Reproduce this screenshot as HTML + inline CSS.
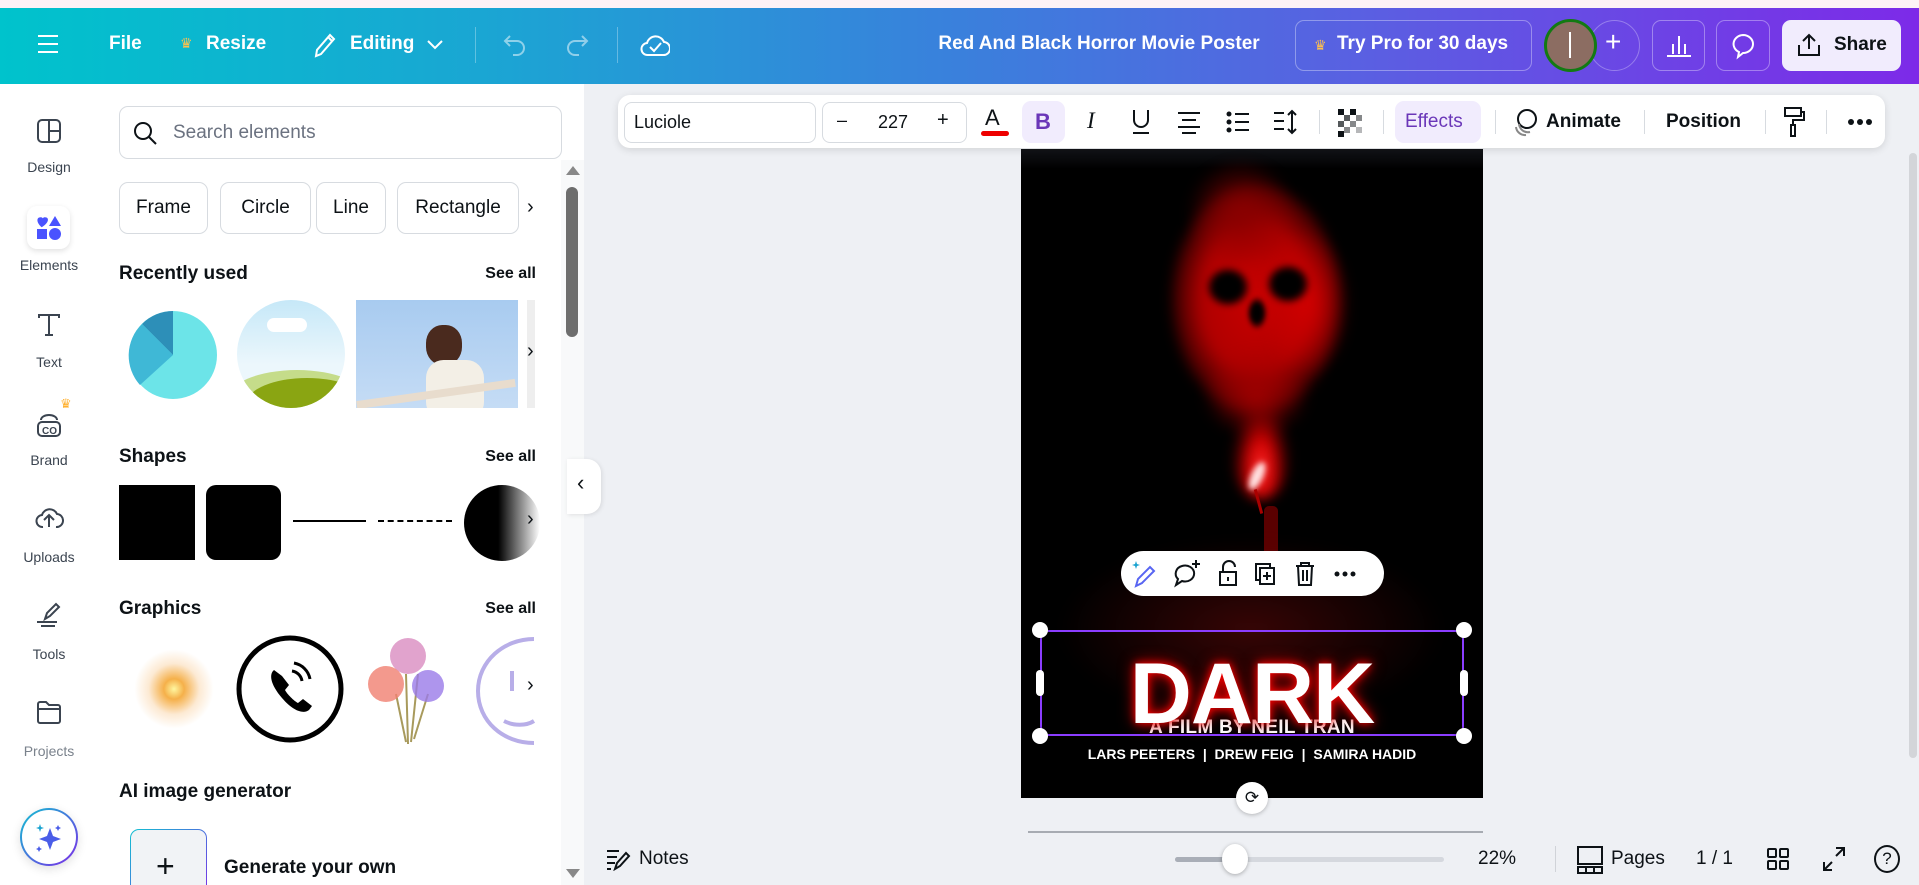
<!DOCTYPE html>
<html><head><meta charset="utf-8"><style>
*{box-sizing:border-box;margin:0;padding:0}
html{width:1919px;height:885px;overflow:hidden}
body{width:1919px;height:885px;overflow:hidden;position:relative;font-family:"Liberation Sans",sans-serif;background:#eef0f4;color:#0d1216}
.a{position:absolute}
.hd{left:0;top:8px;width:1919px;height:76px;background:linear-gradient(90deg,#00c3cc 0%,#1aa6d3 25%,#3a80dc 50%,#5b5ee2 72%,#7d2ae8 100%)}
.ht{color:#fff;font-size:19px;font-weight:bold;top:33px}
.hb{border:1px solid rgba(255,255,255,.35);border-radius:9px}
.rl{width:98px;text-align:center;left:0;font-size:14px;color:#3b4450}
.tb{left:618px;top:95px;width:1267px;height:53px;background:#fff;border-radius:12px;box-shadow:0 2px 8px rgba(0,0,0,.12)}
.bx{border:1px solid #d7dbe0;border-radius:8px}
.chip{top:182px;height:52px;border:1px solid #d7dbe0;border-radius:9px;font-size:19px;line-height:50px;text-align:center;color:#0d1216}
.sec{font-size:19px;font-weight:bold;color:#0d1216}
.see{font-size:16px;left:483px;width:53px;text-align:right;color:#0d1216;font-weight:bold}
.sep{width:1px;height:24px;background:#d7dbe0;top:110px}
.sm{position:absolute;border-radius:50%;filter:blur(6px)}
</style></head><body>
<div class="a" style="left:0;top:0;width:1919px;height:8px;background:#fdf2f6"></div>
<div class="a hd"></div>
<!-- header -->
<svg class="a" style="left:36px;top:33px" width="24" height="22" viewBox="0 0 24 22"><path d="M2 3h20M2 11h20M2 19h20" stroke="#fff" stroke-width="2"/></svg>
<div class="a ht" style="left:109px">File</div>
<div class="a" style="left:180px;top:35px;color:#ffc14d;font-size:14px">♛</div>
<div class="a ht" style="left:206px">Resize</div>
<svg class="a" style="left:311px;top:31px" width="26" height="28" viewBox="0 0 26 28"><path d="M5 25l1-6L19 4l4 4L10 23z M17 6l4 4" stroke="#fff" stroke-width="2" fill="none"/></svg>
<div class="a ht" style="left:350px">Editing</div>
<svg class="a" style="left:426px;top:39px" width="18" height="12"><path d="M2 2l7 7 7-7" stroke="#fff" stroke-width="2" fill="none"/></svg>
<div class="a" style="left:475px;top:27px;width:1px;height:36px;background:rgba(255,255,255,.3)"></div>
<svg class="a" style="left:502px;top:33px" width="26" height="24"><path d="M8 3L3 8l5 5M3 8h12a7 7 0 010 14h-4" stroke="rgba(255,255,255,.5)" stroke-width="2" fill="none"/></svg>
<svg class="a" style="left:564px;top:33px" width="26" height="24"><path d="M18 3l5 5-5 5M23 8H11a7 7 0 000 14h4" stroke="rgba(255,255,255,.5)" stroke-width="2" fill="none"/></svg>
<div class="a" style="left:617px;top:27px;width:1px;height:36px;background:rgba(255,255,255,.3)"></div>
<svg class="a" style="left:640px;top:31px" width="30" height="28"><path d="M8 24a6 6 0 01-1-12 9 9 0 0117-1 6 6 0 01-1 13z" stroke="#fff" stroke-width="2" fill="none"/><path d="M10 16l4 4 7-8" stroke="#fff" stroke-width="2" fill="none"/></svg>
<div class="a ht" style="left:938px;width:322px;text-align:center;font-size:19px">Red And Black Horror Movie Poster</div>
<div class="a hb" style="left:1295px;top:20px;width:237px;height:51px"></div>
<div class="a" style="left:1314px;top:37px;color:#ffc14d;font-size:14px">♛</div>
<div class="a ht" style="left:1337px">Try Pro for 30 days</div>
<div class="a" style="left:1589px;top:20px;width:51px;height:51px;border-radius:50%;border:1px solid rgba(255,255,255,.3)"></div>
<div class="a" style="left:1544px;top:19px;width:53px;height:53px;border-radius:50%;background:#8c6d62;border:3px solid #137a13"></div>
<div class="a" style="left:1569px;top:32px;width:2px;height:26px;background:#fff"></div>
<div class="a" style="left:1605px;top:26px;color:#fff;font-size:28px">+</div>
<div class="a hb" style="left:1652px;top:20px;width:53px;height:51px"></div>
<svg class="a" style="left:1665px;top:32px" width="28" height="26"><path d="M2 24h24M8 22V12M14 22V4M20 22V12" stroke="#fff" stroke-width="2"/></svg>
<div class="a hb" style="left:1716px;top:20px;width:54px;height:51px"></div>
<svg class="a" style="left:1729px;top:32px" width="28" height="28"><path d="M14 3a10 9 0 110 18l-5 4 1-5A10 9 0 0114 3z" stroke="#fff" stroke-width="2" fill="none"/></svg>
<div class="a" style="left:1782px;top:20px;width:119px;height:51px;background:#f1ecfd;border-radius:9px"></div>
<svg class="a" style="left:1796px;top:32px" width="26" height="26"><path d="M13 17V3M7 9l6-6 6 6M3 13v10h20V13" stroke="#0d1216" stroke-width="2" fill="none"/></svg>
<div class="a" style="left:1834px;top:34px;font-size:19px;font-weight:bold">Share</div>

<!-- left rail+panel -->
<div class="a" style="left:0;top:84px;width:584px;height:801px;background:#fff"></div>
<svg class="a" style="left:36px;top:118px" width="26" height="26"><rect x="2" y="2" width="22" height="22" rx="4" stroke="#3b4450" stroke-width="2" fill="none"/><path d="M13 2v22M13 13h11" stroke="#3b4450" stroke-width="2"/></svg>
<div class="a rl" style="top:159px">Design</div>
<div class="a" style="left:27px;top:206px;width:43px;height:43px;background:#fff;border-radius:10px;box-shadow:0 2px 6px rgba(0,0,0,.12)"></div>
<svg class="a" style="left:35px;top:214px" width="28" height="28"><path d="M7 12C2 8 2 3 6 3c1.5 0 2 1 2 1s.5-1 2-1c4 0 4 5-3 9z" fill="#4a53ff" transform="translate(-1,0) scale(1.1)"/><path d="M20 2l6 10H14z" fill="#4a53ff"/><rect x="2" y="15" width="10" height="10" fill="#4a53ff"/><circle cx="20" cy="20" r="6" fill="#4a53ff"/></svg>
<div class="a rl" style="top:257px">Elements</div>
<svg class="a" style="left:36px;top:312px" width="26" height="26"><path d="M3 6V3h20v3M13 3v20M9 23h8" stroke="#3b4450" stroke-width="2" fill="none"/></svg>
<div class="a rl" style="top:354px">Text</div>
<svg class="a" style="left:34px;top:404px" width="30" height="34"><path d="M7 16a8 5 0 0116 0" stroke="#3b4450" stroke-width="2" fill="none"/><rect x="4" y="18" width="22" height="14" rx="4" stroke="#3b4450" stroke-width="2" fill="none"/><text x="8" y="30" font-size="10" font-weight="bold" fill="#3b4450" font-family="Liberation Sans">CO</text></svg>
<div class="a" style="left:60px;top:396px;color:#ffb02e;font-size:13px">♛</div>
<div class="a rl" style="top:452px">Brand</div>
<svg class="a" style="left:34px;top:503px" width="30" height="28"><path d="M9 24a6 6 0 01-1-12 8 8 0 0115-1 6 6 0 01-1 13" stroke="#3b4450" stroke-width="2" fill="none"/><path d="M15 24V13M10 17l5-5 5 5" stroke="#3b4450" stroke-width="2" fill="none"/></svg>
<div class="a rl" style="top:549px">Uploads</div>
<svg class="a" style="left:35px;top:600px" width="28" height="28"><path d="M10 19l2-6 9-9 3 3-9 9z M2 22h20M6 26h14" stroke="#3b4450" stroke-width="2" fill="none"/></svg>
<div class="a rl" style="top:646px">Tools</div>
<svg class="a" style="left:35px;top:698px" width="28" height="28"><path d="M3 6a2 2 0 012-2h6l3 3h9a2 2 0 012 2v14a2 2 0 01-2 2H5a2 2 0 01-2-2z M3 11h22" stroke="#3b4450" stroke-width="2" fill="none"/></svg>
<div class="a rl" style="top:743px;color:#7a828c">Projects</div>
<div class="a" style="left:20px;top:808px;width:58px;height:58px;border-radius:50%;background:linear-gradient(135deg,#11c1d1,#7d2ae8);padding:2px;box-shadow:0 3px 10px rgba(0,0,0,.12)"><div style="width:100%;height:100%;border-radius:50%;background:#fff"></div></div>
<svg class="a" style="left:33px;top:822px" width="32" height="32"><path d="M17 6l3 8 8 3-8 3-3 8-3-8-8-3 8-3z" fill="#4a5de8"/><path d="M7 2l1 3 3 1-3 1-1 3-1-3-3-1 3-1z" fill="#1aa3d0"/><path d="M25 3l1 2 2 1-2 1-1 2-1-2-2-1 2-1z" fill="#4a5de8"/><path d="M6 24l1 2 2 1-2 1-1 2-1-2-2-1 2-1z" fill="#4a5de8"/></svg>

<div class="a bx" style="left:119px;top:106px;width:443px;height:53px;border-radius:9px"></div>
<svg class="a" style="left:132px;top:120px" width="26" height="26"><circle cx="11" cy="11" r="8" stroke="#0d1216" stroke-width="2" fill="none"/><path d="M17 17l7 7" stroke="#0d1216" stroke-width="2"/></svg>
<div class="a" style="left:173px;top:122px;font-size:19px;color:#6b7280">Search elements</div>
<div class="a chip" style="left:119px;width:89px">Frame</div>
<div class="a chip" style="left:220px;width:91px">Circle</div>
<div class="a chip" style="left:316px;width:70px">Line</div>
<div class="a chip" style="left:397px;width:122px">Rectangle</div>
<div class="a" style="left:527px;top:196px;font-size:20px">›</div>
<div class="a sec" style="left:119px;top:263px">Recently used</div><div class="a see" style="top:265px">See all</div>
<svg class="a" style="left:128px;top:310px" width="90" height="90"><circle cx="45" cy="45" r="44" fill="#6ce4e8"/><path d="M45 45L45 1A44 44 0 0 0 14 14z" fill="#2d8fb8"/><path d="M45 45L14 14A44 44 0 0 0 12 75z" fill="#3fb8d6"/></svg>
<div class="a" style="left:237px;top:300px;width:108px;height:108px;border-radius:50%;overflow:hidden;background:linear-gradient(#c6e8f8,#ecf7fc 60%)"><div style="position:absolute;left:-10px;top:70px;width:140px;height:60px;border-radius:50%;background:#c5dc8a"></div><div style="position:absolute;left:10px;top:78px;width:120px;height:50px;border-radius:50%;background:#8aa512"></div><div style="position:absolute;left:30px;top:18px;width:40px;height:14px;border-radius:8px;background:#fff"></div></div>
<div class="a" style="left:356px;top:300px;width:162px;height:108px;background:linear-gradient(#a8cbf0,#c5dcf5);overflow:hidden"><div style="position:absolute;left:70px;top:25px;width:36px;height:40px;border-radius:45%;background:#4a2a1e"></div><div style="position:absolute;left:70px;top:60px;width:58px;height:60px;border-radius:30%;background:#f3efe6"></div><div style="position:absolute;left:0;top:90px;width:160px;height:8px;background:#e8dccd;transform:rotate(-8deg)"></div></div>
<div class="a" style="left:527px;top:300px;width:8px;height:108px;background:#eee"></div>
<div class="a" style="left:527px;top:340px;font-size:20px">›</div>
<div class="a sec" style="left:119px;top:446px">Shapes</div><div class="a see" style="top:448px">See all</div>
<div class="a" style="left:119px;top:485px;width:76px;height:75px;background:#000"></div>
<div class="a" style="left:206px;top:485px;width:75px;height:75px;background:#000;border-radius:10px"></div>
<div class="a" style="left:293px;top:520px;width:73px;height:2px;background:#000"></div>
<div class="a" style="left:378px;top:520px;width:74px;height:0;border-top:2px dashed #000"></div>
<div class="a" style="left:464px;top:485px;width:76px;height:76px;border-radius:50%;background:linear-gradient(90deg,#000 45%,#fff 100%)"></div>
<div class="a" style="left:527px;top:508px;font-size:20px">›</div>
<div class="a sec" style="left:119px;top:598px">Graphics</div><div class="a see" style="top:600px">See all</div>
<div class="a" style="left:134px;top:649px;width:80px;height:80px;border-radius:50%;background:radial-gradient(circle,#fff7a0 0%,#f5b04a 18%,rgba(245,170,80,.25) 45%,rgba(255,255,255,0) 70%)"></div>
<svg class="a" style="left:236px;top:635px" width="110" height="110"><circle cx="54" cy="54" r="51" stroke="#000" stroke-width="5" fill="none"/><path d="M38 35c-5 4-4 14 8 28s22 16 27 12l3-4-9-7-5 4c-4-2-11-9-13-13l4-5-7-9z" fill="#000"/><path d="M56 36a12 12 0 0110 10M58 28a20 20 0 0116 16" stroke="#000" stroke-width="3" fill="none"/></svg>
<svg class="a" style="left:366px;top:634px" width="90" height="112"><path d="M40 40L42 110M52 40L45 108M30 60L40 108M62 60L48 105" stroke="#a89a5c" stroke-width="2" fill="none"/><circle cx="42" cy="22" r="18" fill="#d98cc0" opacity=".8"/><circle cx="20" cy="50" r="18" fill="#f08070" opacity=".8"/><circle cx="62" cy="52" r="16" fill="#9a7ae8" opacity=".8"/></svg>
<svg class="a" style="left:474px;top:636px" width="64" height="110"><path d="M60 3C30 3 4 25 4 55s25 52 56 52" stroke="#b8aee8" stroke-width="4" fill="none"/><path d="M38 35v20M30 85c10 5 22 5 30 0" stroke="#b8aee8" stroke-width="4" fill="none"/></svg>
<div class="a" style="left:527px;top:674px;font-size:20px">›</div>
<div class="a sec" style="left:119px;top:781px">AI image generator</div>
<div class="a" style="left:130px;top:829px;width:77px;height:70px;border-radius:9px;background:linear-gradient(135deg,#11c1d1,#7d2ae8);padding:1px"><div style="width:100%;height:100%;border-radius:8px;background:#f1f3f6"></div></div>
<div class="a" style="left:156px;top:848px;font-size:32px;font-weight:300">+</div>
<div class="a" style="left:224px;top:857px;font-size:19px;font-weight:bold">Generate your own</div>
<div class="a" style="left:561px;top:160px;width:23px;height:725px;background:#f8f9fa"></div>
<div class="a" style="left:566px;top:166px;width:0;height:0;border-left:7px solid transparent;border-right:7px solid transparent;border-bottom:9px solid #888"></div>
<div class="a" style="left:566px;top:187px;width:12px;height:150px;border-radius:6px;background:#6d6d6d"></div>
<div class="a" style="left:566px;top:869px;width:0;height:0;border-left:7px solid transparent;border-right:7px solid transparent;border-top:9px solid #888"></div>
<div class="a" style="left:567px;top:459px;width:34px;height:55px;background:#fff;border-radius:0 14px 14px 0;box-shadow:1px 1px 5px rgba(0,0,0,.1)"></div>
<div class="a" style="left:577px;top:470px;font-size:22px">‹</div>

<!-- poster -->
<div class="a" style="left:1021px;top:149px;width:462px;height:649px;background:#000;overflow:hidden">
 <div class="a" style="left:0;top:0;width:462px;height:20px;background:linear-gradient(#121418,#000)"></div>
 <div class="sm" style="left:150px;top:35px;width:170px;height:230px;background:radial-gradient(ellipse,#c80000 0%,#b00000 45%,rgba(150,0,0,.5) 65%,rgba(0,0,0,0) 75%)"></div>
 <div class="sm" style="left:165px;top:10px;width:110px;height:110px;background:radial-gradient(#8a0000,rgba(0,0,0,0) 70%)"></div>
 <div class="sm" style="left:240px;top:80px;width:90px;height:150px;background:radial-gradient(#d00000,rgba(0,0,0,0) 70%)"></div>
 <div class="sm" style="left:180px;top:200px;width:110px;height:90px;background:radial-gradient(#a00000,rgba(0,0,0,0) 70%)"></div>
 <div class="sm" style="left:185px;top:118px;width:44px;height:40px;background:radial-gradient(#000 45%,rgba(0,0,0,0) 75%);filter:blur(3px)"></div>
 <div class="sm" style="left:245px;top:115px;width:44px;height:40px;background:radial-gradient(#000 45%,rgba(0,0,0,0) 75%);filter:blur(3px)"></div>
 <div class="sm" style="left:226px;top:148px;width:20px;height:32px;background:radial-gradient(#000 40%,rgba(0,0,0,0) 75%);filter:blur(2px)"></div>
 <div class="sm" style="left:210px;top:250px;width:60px;height:100px;background:radial-gradient(ellipse at 50% 70%,#ff3030 0%,#d00000 30%,rgba(160,0,0,.4) 55%,rgba(0,0,0,0) 72%)"></div>
 <div class="sm" style="left:230px;top:312px;width:12px;height:30px;background:#ffe0e0;transform:rotate(25deg);filter:blur(3px)"></div>
 <div class="a" style="left:236px;top:340px;width:3px;height:25px;background:#a00;transform:rotate(-15deg)"></div>
 <div class="a" style="left:243px;top:357px;width:14px;height:45px;background:#5a0000;border-radius:5px 5px 0 0"></div>
 <div class="sm" style="left:20px;top:380px;width:420px;height:200px;background:radial-gradient(ellipse,rgba(110,10,10,.5),rgba(0,0,0,0) 65%)"></div>
 <div class="a" style="left:0;top:568px;width:462px;text-align:center;color:#fff;font-weight:bold;font-size:19px;letter-spacing:.3px">A FILM BY NEIL TRAN</div>
 <div class="a" style="left:0;top:497px;width:462px;text-align:center;color:#fff;font-weight:bold;font-size:86px;line-height:96px;letter-spacing:-1px;text-shadow:0 0 8px #ff0000,0 0 16px #d00000">DARK</div>
 <div class="a" style="left:0;top:597px;width:462px;text-align:center;color:#fff;font-weight:bold;font-size:14px">LARS PEETERS &nbsp;|&nbsp; DREW FEIG &nbsp;|&nbsp; SAMIRA HADID</div>
</div>
<div class="a" style="left:1040px;top:630px;width:424px;height:106px;border:2px solid #8b3dff"></div>
<div class="a" style="left:1032px;top:622px;width:16px;height:16px;border-radius:50%;background:#fff;box-shadow:0 0 3px rgba(0,0,0,.4)"></div>
<div class="a" style="left:1456px;top:622px;width:16px;height:16px;border-radius:50%;background:#fff;box-shadow:0 0 3px rgba(0,0,0,.4)"></div>
<div class="a" style="left:1032px;top:728px;width:16px;height:16px;border-radius:50%;background:#fff;box-shadow:0 0 3px rgba(0,0,0,.4)"></div>
<div class="a" style="left:1456px;top:728px;width:16px;height:16px;border-radius:50%;background:#fff;box-shadow:0 0 3px rgba(0,0,0,.4)"></div>
<div class="a" style="left:1036px;top:670px;width:8px;height:26px;border-radius:4px;background:#fff"></div>
<div class="a" style="left:1460px;top:670px;width:8px;height:26px;border-radius:4px;background:#fff"></div>
<div class="a" style="left:1236px;top:782px;width:32px;height:32px;border-radius:50%;background:#fff;box-shadow:0 1px 4px rgba(0,0,0,.25);text-align:center;line-height:32px;font-size:17px">⟳</div>
<div class="a" style="left:1121px;top:551px;width:263px;height:45px;background:#fff;border-radius:23px"></div>
<svg class="a" style="left:1130px;top:558px" width="240" height="32" fill="none" stroke-width="2">
<path d="M6 28l2-7 12-12 4 4-12 12z" stroke="#5865f2"/><path d="M5 6l1-3 1 3 3 1-3 1-1 3-1-3-3-1z" fill="#1aa3d0"/>
<path d="M52 8a9 8 0 110 15l-6 4 2-6a9 8 0 014-13zM62 6h8M66 2v8" stroke="#0d1216"/>
<path d="M93 14v-5a6 6 0 0112 0M90 14h16v13H90zM98 19v4" stroke="#0d1216"/>
<path d="M126 10V6h14v4M130 10h14v16h-14zM137 14v8M133 18h8M126 10v12h4" stroke="#0d1216"/>
<path d="M166 8h18M171 8V5h8v3M168 8l1 19h12l1-19M173 12v11M177 12v11" stroke="#0d1216"/>
<circle cx="207" cy="16" r="2.5" fill="#0d1216"/><circle cx="215" cy="16" r="2.5" fill="#0d1216"/><circle cx="223" cy="16" r="2.5" fill="#0d1216"/>
</svg>

<!-- format toolbar -->
<div class="a tb"></div>
<div class="a bx" style="left:624px;top:102px;width:192px;height:41px"></div>
<div class="a" style="left:634px;top:112px;font-size:18px">Luciole</div>
<div class="a bx" style="left:822px;top:102px;width:145px;height:41px"></div>
<div class="a" style="left:837px;top:110px;font-size:18px">–</div>
<div class="a" style="left:878px;top:112px;font-size:18px">227</div>
<div class="a" style="left:937px;top:109px;font-size:20px">+</div>
<div class="a" style="left:985px;top:105px;font-size:22px">A</div>
<div class="a" style="left:981px;top:131px;width:28px;height:5px;border-radius:3px;background:#e00"></div>
<div class="a" style="left:1022px;top:101px;width:43px;height:42px;border-radius:9px;background:#f1ecfd"></div>
<div class="a" style="left:1035px;top:109px;font-size:22px;font-weight:bold;color:#6a36b8">B</div>
<div class="a" style="left:1087px;top:108px;font-size:23px;font-style:italic;font-family:'Liberation Serif',serif">I</div>
<svg class="a" style="left:1130px;top:108px" width="22" height="28"><path d="M4 2v10a7 7 0 0014 0V2M3 25h16" stroke="#0d1216" stroke-width="2" fill="none"/></svg>
<svg class="a" style="left:1176px;top:110px" width="26" height="24"><path d="M2 3h22M6 10h14M2 17h22M6 23h14" stroke="#0d1216" stroke-width="2"/></svg>
<svg class="a" style="left:1225px;top:110px" width="26" height="24"><circle cx="4" cy="4" r="2.5" fill="#0d1216"/><circle cx="4" cy="12" r="2.5" fill="#0d1216"/><circle cx="4" cy="20" r="2.5" fill="#0d1216"/><path d="M10 4h14M10 12h14M10 20h14" stroke="#0d1216" stroke-width="2"/></svg>
<svg class="a" style="left:1272px;top:108px" width="28" height="28"><path d="M2 5h10M2 13h10M2 21h10M20 3v22M16 7l4-4 4 4M16 21l4 4 4-4" stroke="#0d1216" stroke-width="2" fill="none"/></svg>
<div class="a sep" style="left:1319px"></div>
<svg class="a" style="left:1338px;top:109px" width="26" height="28"><g fill="#0d1216"><rect x="0" y="0" width="6" height="6"/><rect x="12" y="0" width="6" height="6"/><rect x="6" y="6" width="6" height="6" opacity=".7"/><rect x="18" y="6" width="6" height="6" opacity=".5"/><rect x="0" y="12" width="6" height="6" opacity=".7"/><rect x="12" y="12" width="6" height="6" opacity=".5"/><rect x="6" y="18" width="6" height="6" opacity=".5"/><rect x="18" y="18" width="6" height="6" opacity=".3"/><rect x="0" y="22" width="6" height="6"/></g></svg>
<div class="a sep" style="left:1383px"></div>
<div class="a" style="left:1395px;top:101px;width:86px;height:42px;border-radius:9px;background:#f1ecfd"></div>
<div class="a" style="left:1405px;top:111px;font-size:19px;color:#6a36b8">Effects</div>
<div class="a sep" style="left:1495px"></div>
<svg class="a" style="left:1510px;top:107px" width="32" height="30"><circle cx="17" cy="12" r="9" stroke="#0d1216" stroke-width="2" fill="none"/><path d="M9 17a9 9 0 0011 8M6 20a9 9 0 0010 8" stroke="#888" stroke-width="2" fill="none"/></svg>
<div class="a" style="left:1546px;top:111px;font-size:19px;font-weight:bold">Animate</div>
<div class="a sep" style="left:1644px"></div>
<div class="a" style="left:1666px;top:111px;font-size:19px;font-weight:bold">Position</div>
<div class="a sep" style="left:1765px"></div>
<svg class="a" style="left:1782px;top:106px" width="24" height="32"><path d="M3 2h16v8H3zM19 6h3v8H11v5M9 19h4v11H9z" stroke="#0d1216" stroke-width="2" fill="none"/></svg>
<div class="a sep" style="left:1826px"></div>
<svg class="a" style="left:1847px;top:118px" width="26" height="8"><circle cx="4" cy="4" r="3" fill="#0d1216"/><circle cx="13" cy="4" r="3" fill="#0d1216"/><circle cx="22" cy="4" r="3" fill="#0d1216"/></svg>
<div class="a" style="left:1909px;top:153px;width:8px;height:605px;border-radius:4px;background:#d3d5d9"></div>

<!-- bottom -->
<div class="a" style="left:1028px;top:831px;width:455px;height:2px;background:#a7abb2"></div>
<svg class="a" style="left:605px;top:847px" width="26" height="24"><path d="M2 4h12M2 10h10M2 16h8M2 22h4M10 22l2-6 9-10 3 3-9 10z" stroke="#0d1216" stroke-width="2" fill="none"/></svg>
<div class="a" style="left:639px;top:848px;font-size:19px">Notes</div>
<div class="a" style="left:1175px;top:857px;width:269px;height:5px;border-radius:3px;background:#d5d8de"></div>
<div class="a" style="left:1175px;top:857px;width:60px;height:5px;border-radius:3px;background:#a9aeb7"></div>
<div class="a" style="left:1222px;top:844px;width:26px;height:30px;border-radius:50%;background:#fff;box-shadow:0 1px 4px rgba(0,0,0,.3)"></div>
<div class="a" style="left:1478px;top:848px;font-size:19px">22%</div>
<div class="a" style="left:1555px;top:846px;width:1px;height:26px;background:#d0d3d8"></div>
<svg class="a" style="left:1576px;top:845px" width="28" height="30"><rect x="2" y="2" width="24" height="17" stroke="#0d1216" stroke-width="2" fill="none"/><path d="M2 22h24v6H2zM10 22v6M18 22v6" stroke="#0d1216" stroke-width="2" fill="none"/></svg>
<div class="a" style="left:1611px;top:848px;font-size:19px">Pages</div>
<div class="a" style="left:1696px;top:848px;font-size:19px">1 / 1</div>
<svg class="a" style="left:1766px;top:847px" width="24" height="24"><g stroke="#0d1216" stroke-width="2" fill="none"><rect x="2" y="2" width="8" height="8" rx="1"/><rect x="14" y="2" width="8" height="8" rx="1"/><rect x="2" y="14" width="8" height="8" rx="1"/><rect x="14" y="14" width="8" height="8" rx="1"/></g></svg>
<svg class="a" style="left:1822px;top:846px" width="24" height="26"><path d="M14 2h8v8M22 2L14 10M2 16v8h8M2 24l8-8" stroke="#0d1216" stroke-width="2" fill="none"/></svg>
<div class="a" style="left:1874px;top:845px;width:26px;height:28px;border-radius:50%;border:2px solid #0d1216;text-align:center;font-size:17px;line-height:24px">?</div>
</body></html>
